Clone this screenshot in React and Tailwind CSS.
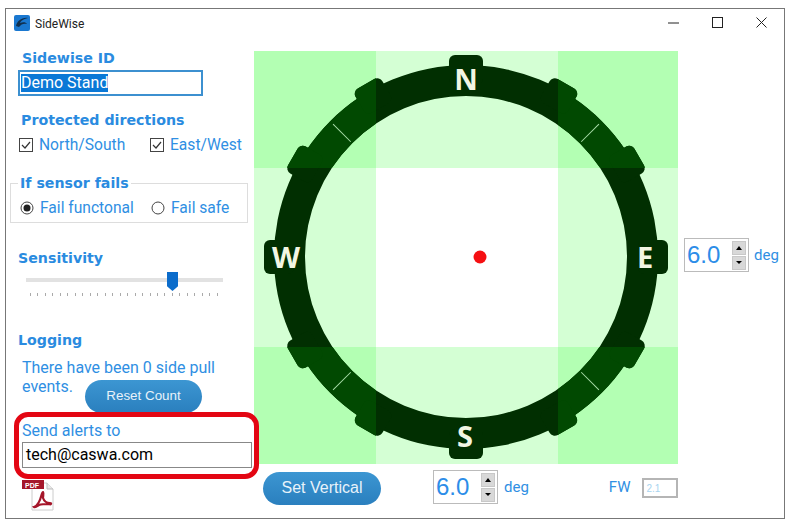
import React from "react";

const BLUE = "text-[#2f8fe3]";

const Heading = ({ className = "", children }) => (
  <div
    className={`font-['DejaVu_Sans',sans-serif] font-bold text-[14.200px] leading-[18px] text-[#2a8be0] ${className}`}
  >
    {children}
  </div>
);

const CheckBox = () => (
  <svg width="14" height="14" viewBox="0 0 14 14" className="shrink-0">
    <rect x="0.5" y="0.5" width="13" height="13" fill="#fff" stroke="#444" />
    <path d="M3 7l3 3 5-6" fill="none" stroke="#333" strokeWidth="1.2" />
  </svg>
);

const Radio = ({ on }) => (
  <svg width="14" height="14" viewBox="0 0 14 14" className="shrink-0">
    <circle cx="7" cy="7" r="6" fill="#fff" stroke="#444" />
    {on && <circle cx="7" cy="7" r="3.5" fill="#222" />}
  </svg>
);

const Option = ({ icon, width, children }) => (
  <div className={`flex items-center gap-[6px] ${width}`}>
    {icon}
    <span className={`text-[15.600px] leading-5 ${BLUE}`}>{children}</span>
  </div>
);

const Spinner = () => (
  <div className="w-[65px] h-[34px] border border-[#bbb] bg-white flex items-center justify-between pl-[2px] pr-[2px]">
    <span className="font-['Liberation_Sans',sans-serif] text-[24px] leading-none text-[#2c8de8]">6.0</span>
    <div className="flex flex-col gap-[1px] w-[14px]">
      <div className="h-[14px] bg-[#d8d8d8] border border-[#c8c8c8] flex items-center justify-center">
        <div className="w-0 h-0 border-x-[3px] border-x-transparent border-b-[4px] border-b-black" />
      </div>
      <div className="h-[14px] bg-[#d8d8d8] border border-[#c8c8c8] flex items-center justify-center">
        <div className="w-0 h-0 border-x-[3px] border-x-transparent border-t-[3px] border-t-black" />
      </div>
    </div>
  </div>
);

const Logo = () => (
  <svg width="16" height="16" viewBox="0 0 16 16">
    <rect width="16" height="16" rx="2" fill="#1a78d0" />
    <path d="M2 11C3 6 8 2 14 3 9 4 7 6 6 8c3-1 6-1 7 1-3-1-6 0-8 3-1 0-2-1-3-1z" fill="#10304f" />
  </svg>
);

const PdfIcon = () => (
  <svg width="32" height="32" viewBox="0 0 32 32">
    <path d="M10 3h15l6 6v21H10z" fill="#fff" stroke="#ccc" />
    <path d="M25 3v6h6" fill="#e8e8e8" stroke="#bbb" />
    <rect x="0" y="0" width="22" height="9" fill="#a5162a" />
    <text x="3" y="7.5" fontSize="7" fontWeight="700" fill="#fff" fontFamily="Liberation Sans">PDF</text>
    <path
      d="M12 27c3-1 6-6 7.500-12 .5-2 1-3 1.500-3 1 1 0 4 0 6 1 3 3 5 7 5 2 0 1 2-1 1-3 0-7 0-10 1-2 1-4 3-5 2z"
      fill="none"
      stroke="#a5162a"
      strokeWidth="2.200"
    />
  </svg>
);

// one bump on the ring, drawn pointing north, then rotated round the centre
const Bump = ({ angle, w, top, h }) => (
  <rect
    x={212 - w / 2}
    y={top}
    width={w}
    height={h}
    rx="6"
    transform={`rotate(${angle} 212 206)`}
  />
);

const RingShape = () => (
  <g>
    <path
      fillRule="evenodd"
      d="M20 206a192 192 0 1 0 384 0a192 192 0 1 0-384 0zM51 206a161 161 0 1 1 322 0a161 161 0 1 1-322 0z"
    />
    {[30, 60, 120, 150, 210, 240, 300, 330].map((a) => (
      <Bump key={a} angle={a} w={31} top={6} h={28} />
    ))}
    {[0, 90, 180, 270].map((a) => (
      <Bump key={a} angle={a} w={34} top={4} h={30} />
    ))}
  </g>
);

const Compass = () => (
  <svg width="424" height="413" viewBox="0 0 424 413" className="absolute inset-0">
    <defs>
      <clipPath id="corners">
        <rect x="0" y="0" width="122" height="117" />
        <rect x="304" y="0" width="120" height="117" />
        <rect x="0" y="296" width="122" height="117" />
        <rect x="304" y="296" width="120" height="117" />
      </clipPath>
    </defs>
    <g fill="#012f01">
      <RingShape />
    </g>
    <g fill="#014901" clipPath="url(#corners)">
      <RingShape />
    </g>
    {[45, 135, 225, 315].map((a) => (
      <line
        key={a}
        x1="212"
        y1="18"
        x2="212"
        y2="43"
        stroke="#a8dca8"
        strokeWidth="1"
        transform={`rotate(${a} 212 206)`}
      />
    ))}
    <g fill="#f2f6e4" fontFamily="Open Sans, sans-serif" fontWeight="700" fontSize="29" textAnchor="middle">
      <text x="212" y="39">N</text>
      <text x="211" y="396">S</text>
      <text x="32" y="217">W</text>
      <text x="391" y="217">E</text>
    </g>
    <circle cx="226" cy="206" r="6.500" fill="#f50f12" />
  </svg>
);

const cells = [
  "bg-[#b3ffb3]", "bg-[#d4ffd4]", "bg-[#b3ffb3]",
  "bg-[#d4ffd4]", "bg-white", "bg-[#d4ffd4]",
  "bg-[#b3ffb3]", "bg-[#d4ffd4]", "bg-[#b3ffb3]",
];

const ticks = Array.from({ length: 26 });

export default function App() {
  return (
    <div className="w-[790px] h-[524px] bg-white pt-2 pl-[5px] font-['Roboto',sans-serif] overflow-hidden">
      <div className="w-[780px] h-[511px] border border-[#777] flex flex-col">
        {/* title bar */}
        <div className="h-[42px] shrink-0 flex items-start pt-[5px] pl-2">
          <div className="mt-[1px]">
            <Logo />
          </div>
          <span className="ml-[5px] mt-[1px] text-[12px] leading-[18px] text-[#222]">SideWise</span>
          <div className="ml-auto flex items-center gap-[33px] pr-[17px] mt-[3px] text-[#222]">
            <svg width="11" height="11" viewBox="0 0 11 11">
              <path d="M0 6h11" stroke="currentColor" strokeWidth="1" />
            </svg>
            <svg width="11" height="11" viewBox="0 0 11 11">
              <rect x="0.500" y="0.500" width="10" height="10" fill="none" stroke="currentColor" />
            </svg>
            <svg width="11" height="11" viewBox="0 0 11 11">
              <path d="M0.500 0.500l10 10M10.500 0.500l-10 10" stroke="currentColor" />
            </svg>
          </div>
        </div>

        <div className="flex flex-1 min-h-0">
          {/* left column */}
          <div className="w-[248px] shrink-0 relative z-10 flex flex-col">
            <Heading className="ml-4 -mt-[2px]">Sidewise ID</Heading>
            <div className="ml-3 mt-[3px] w-[185px] h-[26px] border-2 border-[#3c90d0] flex items-center pl-[1px]">
              <span className="bg-[#0a78d6] text-white text-[16px] leading-[18px]">Demo Stand</span>
            </div>
            <Heading className="ml-[15px] mt-[15px]">Protected directions</Heading>
            <div className="flex ml-[13px] mt-[6px]">
              <Option icon={<CheckBox />} width="w-[131px]">North/South</Option>
              <Option icon={<CheckBox />}>East/West</Option>
            </div>
            <div className="relative ml-1 mt-[28px] w-[238px] h-[40px] border border-[#ddd] flex items-end pb-[4px] pl-[9px]">
              <Heading className="absolute -top-[10px] left-[7px] bg-white px-[2px]">If sensor fails</Heading>
              <Option icon={<Radio on />} width="w-[131px]">Fail functonal</Option>
              <Option icon={<Radio />}>Fail safe</Option>
            </div>
            <Heading className="ml-3 mt-[26px]">Sensitivity</Heading>
            <div className="relative ml-5 mt-[5px] w-[197px] h-[24px]">
              <div className="mt-[6px] h-[4px] bg-[#e2e2e2]" />
              <div className="absolute left-[141px] top-0 w-[11px] h-[19px] bg-[#0b6ccb] [clip-path:polygon(0_0,100%_0,100%_75%,50%_100%,0_75%)]" />
              <div className="absolute left-[4px] right-[5px] top-[21px] flex justify-between">
                {ticks.map((_, i) => (
                  <div key={i} className="w-[1px] h-[3px] bg-[#aaa]" />
                ))}
              </div>
            </div>
            <Heading className="ml-3 mt-[35px]">Logging</Heading>
            <div className={`ml-4 mt-[9px] text-[16px] leading-[19px] ${BLUE}`}>There have been 0 side pull</div>
            <div className="flex items-start ml-4 h-[35px] shrink-0">
              <span className={`w-[63px] text-[16px] leading-[19px] ${BLUE}`}>events.</span>
              <div className="mt-[3px] w-[117px] h-[33px] rounded-full bg-[linear-gradient(#3c96d2,#2a7fbe)] flex items-center justify-center font-['Liberation_Sans',sans-serif] text-[13.400px] text-[#e8f2fa]">
                Reset Count
              </div>
            </div>
            <div className="ml-2 w-[245px] h-[67px] shrink-0 border-[5px] border-[#e30613] rounded-[14px] bg-white pl-[3px] pt-[4px]">
              <div className={`text-[16px] leading-[20px] ${BLUE}`}>Send alerts to</div>
              <div className="mt-[1px] w-[230px] h-[26px] border border-[#888] flex items-center pl-[3px] text-[16px] text-black">
                tech@caswa.com
              </div>
            </div>
            <div className="ml-4 mt-[1px]">
              <PdfIcon />
            </div>
          </div>

          {/* compass + controls */}
          <div className="flex flex-col">
            <div className="flex">
              <div className="relative w-[424px] h-[413px] grid grid-cols-[122px_182px_120px] grid-rows-[117px_179px_117px]">
                {cells.map((c, i) => (
                  <div key={i} className={c} />
                ))}
                <Compass />
              </div>
              <div className="flex items-center gap-[5px] ml-[6px] pb-[5px]">
                <Spinner />
                <span className={`text-[15px] ${BLUE}`}>deg</span>
              </div>
            </div>
            <div className="flex items-center h-[48px] pl-[9px] pb-[2px]">
              <div className="w-[118px] h-[33px] mt-[2px] rounded-full bg-[linear-gradient(#3c96d2,#2a7fbe)] flex items-center justify-center font-['Liberation_Sans',sans-serif] text-[16px] text-[#e8f2fa]">
                Set Vertical
              </div>
              <div className="ml-[52px]">
                <Spinner />
              </div>
              <span className={`ml-[6px] mt-[1px] text-[15px] ${BLUE}`}>deg</span>
              <span className={`ml-[80px] mt-[1px] text-[15px] ${BLUE}`}>FW</span>
              <div className="ml-[12px] mt-[2px] w-[36px] h-[20px] border-2 border-[#b5b5b5] flex items-center pl-[2px] font-['Liberation_Sans',sans-serif] text-[10px] text-[#a8d4f0]">
                2.1
              </div>
            </div>
          </div>
        </div>
      </div>
    </div>
  );
}
